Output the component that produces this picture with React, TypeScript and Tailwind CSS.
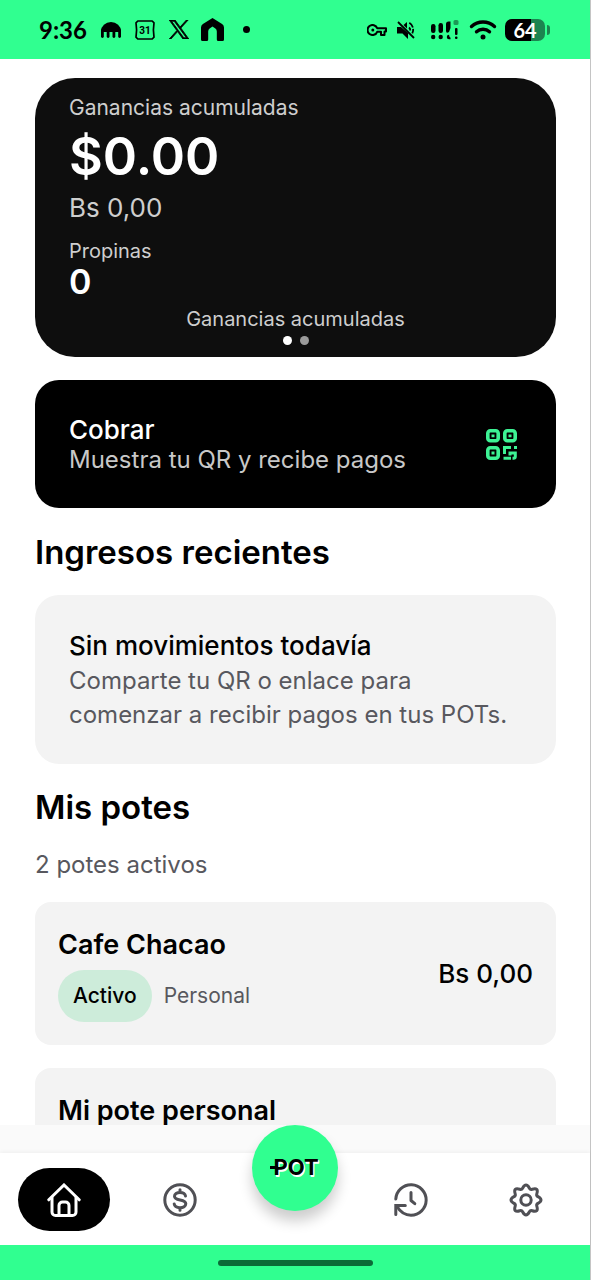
import type { ReactNode } from "react";

type Pot = { id: string; name: string; status?: string; kind?: string; balance?: string };

const pots: Pot[] = [
  { id: "cafe-chacao", name: "Cafe Chacao", status: "Activo", kind: "Personal", balance: "Bs 0,00" },
  { id: "mi-pote", name: "Mi pote personal" },
];

function StatusBar() {
  return (
    <header className="flex h-[59px] shrink-0 items-center justify-between bg-[#30ff90] pl-[39px] pr-10 text-black">
      <div className="flex items-center">
        <time className="w-[62px] font-['Lato',sans-serif] text-2xl font-bold leading-7">9:36</time>
        {/* Kraken */}
        <svg className="h-4 w-5" viewBox="0 0 20 16" fill="currentColor" aria-hidden="true">
          <path d="M0 9a10 9 0 0 1 20 0v1H0Z" />
          <rect x="0" y="7" width="2.800" height="9" rx="1.400" />
          <rect x="5.700" y="7" width="2.800" height="9" rx="1.400" />
          <rect x="11.500" y="7" width="2.800" height="9" rx="1.400" />
          <rect x="17.200" y="7" width="2.800" height="9" rx="1.400" />
        </svg>
        {/* Calendar */}
        <svg className="ml-3.5 size-5" viewBox="0 0 20 20" fill="none" stroke="currentColor" strokeWidth="1.700" aria-hidden="true">
          <path d="M2.800 1h14.400L19 2.800 18.400 10l.6 7.200-1.800 1.800H2.800L1 17.200 1.600 10 1 2.800Z" strokeLinejoin="round" />
          <text x="10" y="13.500" textAnchor="middle" fontSize="10" fontWeight="700" fontFamily="Roboto, sans-serif" fill="currentColor" stroke="none">
            31
          </text>
        </svg>
        {/* X */}
        <svg className="ml-3.5 h-[19px] w-5" viewBox="0 0 24 24" preserveAspectRatio="none" fill="currentColor" aria-hidden="true">
          <path d="M14.234 10.162 22.977 0h-2.072l-7.591 8.824L7.251 0H.258l9.168 13.343L.258 24H2.330l8.016-9.318L16.749 24h6.993zm-2.837 3.299-.929-1.329L3.076 1.560h3.182l5.965 8.532.929 1.329 7.754 11.090h-3.182z" stroke="currentColor" strokeWidth="1" />
        </svg>
        {/* Arch */}
        <svg className="ml-3 h-[23px] w-[23px]" viewBox="0 0 24 23" preserveAspectRatio="none" fill="currentColor" aria-hidden="true">
          <path d="M12 0 22 6Q24 7.200 24 9.500V21.500Q24 23 22.500 23H18Q16.500 23 16.500 21.500V13.500Q16.500 11.500 15 10.500L12 8.500 9 10.500Q7.500 11.500 7.500 13.500V21.500Q7.500 23 6 23H1.500Q0 23 0 21.500V9.500Q0 7.200 2 6Z" />
        </svg>
        <span className="ml-[19px] size-[7px] rounded-full bg-black" />
      </div>

      <div className="flex items-center">
        {/* VPN key */}
        <svg className="h-3 w-5" viewBox="0 0 20 12" fill="none" stroke="currentColor" strokeWidth="2" aria-hidden="true">
          <path d="M10.200 4.200H19v3.300h-1.500V11H14V7.800h-3.800a5 5 0 1 1 0-3.600Z" strokeLinejoin="round" />
          <circle cx="5.800" cy="6" r="1.500" fill="currentColor" stroke="none" />
        </svg>
        {/* Muted */}
        <svg className="ml-2.5 size-[18px]" viewBox="0 0 18 18" fill="none" stroke="currentColor" strokeWidth="1.800" aria-hidden="true">
          <path d="M0 6h4L11 12v6l-5.500-5.500H0Z" fill="currentColor" stroke="none" />
          <path d="M10 1v6.500L6.500 4Z" fill="currentColor" stroke="none" />
          <path d="m1 1 16 16" />
          <path d="M12 6.500q1.400 1 1.200 3M12.300 1.800a8 8 0 0 1 3 10.500" strokeDasharray="6 1.200" />
        </svg>
        {/* Dual signal */}
        <svg className="ml-4 h-5 w-7" viewBox="0 0 28 20" fill="currentColor" aria-hidden="true">
          <rect x="0" y="4" width="4.500" height="9" rx="2.200" />
          <rect x="7.500" y="3" width="4.500" height="10" rx="2.200" />
          <path d="M15 4q0-2.500 2.500-2.500h2V8L18 12q-3 2-3-1.500Z" />
          <circle cx="2.200" cy="17" r="2.200" />
          <circle cx="9.700" cy="17" r="2.200" />
          <path d="M18 14.800a2.200 2.200 0 0 0 0 4.400h1.500v-1.500l-1-1Z" />
          <rect x="22.500" y="0" width="5" height="5" rx="1.500" opacity=".4" />
          <rect x="24" y="8" width="2.500" height="7" rx="1" />
          <rect x="24" y="16.500" width="2.500" height="2.500" rx="1" />
        </svg>
        {/* Wifi */}
        <svg className="ml-2.5 h-5 w-7" viewBox="0 0 28 20" fill="none" stroke="currentColor" strokeWidth="3.400" strokeLinecap="round" aria-hidden="true">
          <path d="M2.500 6.500a17 17 0 0 1 23 0M7.500 11.800a9.500 9.500 0 0 1 13 0" />
          <circle cx="14" cy="17" r="2.500" fill="currentColor" stroke="none" />
        </svg>
        <span className="ml-2 flex h-[22px] w-10 items-center justify-center rounded-[7px] bg-linear-to-r from-black from-65% to-[#1c8450] to-65% font-['Lato',sans-serif] text-xl font-bold leading-5 text-white">
          64
        </span>
        <span className="ml-0.5 h-2.5 w-[3px] rounded-r-full bg-[#1c8450]" />
      </div>
    </header>
  );
}

function EarningsCard() {
  return (
    <section className="flex flex-col rounded-[40px] bg-[#0e0e0e] px-[34px] pb-3 pt-4 text-white">
      <p className="text-[21px] leading-7 text-[#cecece]">Ganancias acumuladas</p>
      <p className="text-[52px] font-semibold leading-[70px]">$0.00</p>
      <p className="text-[26px] leading-8 text-[#cecece]">Bs 0,00</p>
      <p className="mt-[15px] text-xl leading-6 text-[#cecece]">Propinas</p>
      <p className="text-[34px] font-semibold leading-[38px]">0</p>
      <p className="mt-1.5 text-center text-xl leading-6 text-[#cecece]">Ganancias acumuladas</p>
      <div className="mt-[5px] flex justify-center gap-2">
        <span className="size-[9px] rounded-full bg-white" />
        <span className="size-[9px] rounded-full bg-[#9b9b9b]" />
      </div>
    </section>
  );
}

function QrIcon() {
  return (
    <svg className="mr-[5px] size-[31px]" viewBox="0 0 31 31" fill="none" stroke="#3df294" strokeWidth="3.600" aria-hidden="true">
      <rect x="1.800" y="1.800" width="10.400" height="10" rx="2.500" />
      <rect x="18.800" y="1.800" width="10.400" height="10" rx="2.500" />
      <rect x="1.800" y="18.800" width="10.400" height="10.400" rx="2.500" />
      <path d="M5.500 6.800h3M22.500 6.800h3M5.500 24h3" strokeWidth="2.800" />
      <path d="M18.500 25v-6.500h6.500M17.500 29.300h7.500M23 24h6.300v3.500q0 1.800-1.800 1.800h-1M24 22.500v4M28 18.500h3" strokeWidth="3" />
    </svg>
  );
}

function PotCard({ name, status, kind, balance }: Omit<Pot, "id">) {
  return (
    <li className="flex min-h-[143px] justify-between rounded-2xl bg-[#f3f3f3] px-[23px] py-[23px]">
      <div>
        <h3 className="text-[27px] font-semibold leading-10">{name}</h3>
        {status && (
          <div className="mt-[5px] flex items-center gap-3">
            <span className="rounded-full bg-[#cdecda] px-[15px] py-3 text-[21px] font-medium leading-7">{status}</span>
            <span className="text-[21px] leading-7 text-[#58585e]">{kind}</span>
          </div>
        )}
      </div>
      {balance && <p className="self-center text-[26px] font-medium leading-8">{balance}</p>}
    </li>
  );
}

function NavButton({ label, active, children }: { label: string; active?: boolean; children: ReactNode }) {
  return (
    <button
      type="button"
      aria-label={label}
      className={`flex h-[63px] w-[92px] items-center justify-center rounded-full ${
        active ? "bg-black text-white" : "text-[#505055]"
      }`}
    >
      <svg
        className="size-[34px]"
        viewBox="0 0 34 34"
        fill="none"
        stroke="currentColor"
        strokeWidth="3"
        strokeLinecap="round"
        strokeLinejoin="round"
        aria-hidden="true"
      >
        {children}
      </svg>
    </button>
  );
}

function BottomNav() {
  return (
    <nav className="relative shrink-0 bg-[#fafafa] pt-7">
      <div className="flex items-center justify-between bg-white px-[18px] pb-[14px] pt-[15px] shadow-[0_-1px_4px_rgba(0,0,0,0.05)]">
        <NavButton label="Inicio" active>
          <path d="M1.800 16.800 17 2l15.200 14.800" strokeLinejoin="miter" />
          <path d="M5 14.500V29a3.500 3.500 0 0 0 3.500 3.500h17A3.500 3.500 0 0 0 29 29V14.500" />
          <path d="M12 32V22.500a3.500 3.500 0 0 1 3.500-3.500h3a3.500 3.500 0 0 1 3.500 3.500V32" />
        </NavButton>
        <NavButton label="Pagos">
          <circle cx="17" cy="17" r="15.200" />
          <path d="M22.500 13c-.4-2.200-2.500-3.500-5.500-3.500-3.200 0-5.500 1.500-5.500 3.700 0 5.300 11.300 2.200 11.300 7.600 0 2.400-2.500 3.900-5.800 3.900-3.200 0-5.500-1.400-5.800-3.800M17 6.800v2.700M17 24.700v2.500" />
        </NavButton>
        <span className="w-[92px]" />
        <NavButton label="Historial">
          <path d="M1.800 16A15.200 15.200 0 1 1 17 32.200C10.500 32.200 6 28.500 3 23.500" />
          <path d="M1.800 31.500V22.500h9.500" strokeLinejoin="miter" />
          <path d="M17 9.500v8l3.800 3.200" />
        </NavButton>
        <NavButton label="Ajustes">
          <path d="M13.600 5.200C14.500 3.500 15.200 2 17 2s2.500 1.500 3.400 3.200c.6 1.100 1.500 1.500 2.700 1.100 1.900-.6 3.400-1.100 4.600.1 1.200 1.200.7 2.700.1 4.500-.4 1.200 0 2.100 1.100 2.700C30.600 14.500 32 15.200 32 17s-1.400 2.500-3.100 3.400c-1.100.6-1.500 1.500-1.100 2.700.6 1.800 1.100 3.300-.1 4.500-1.200 1.200-2.700.7-4.600.1-1.200-.4-2.100 0-2.700 1.100C19.500 30.500 18.800 32 17 32s-2.500-1.500-3.400-3.200c-.6-1.100-1.500-1.500-2.700-1.100-1.900.6-3.400 1.100-4.600-.1-1.200-1.200-.7-2.700-.1-4.500.4-1.200 0-2.100-1.100-2.700C3.400 19.500 2 18.800 2 17s1.400-2.500 3.100-3.400c1.100-.6 1.500-1.500 1.100-2.700-.6-1.800-1.100-3.300.1-4.500 1.200-1.200 2.700-.7 4.600-.1 1.200.4 2.100 0 2.700-1.100Z" />
          <circle cx="17" cy="17" r="5.200" />
        </NavButton>
      </div>

      {/* Floating POT button */}
      <button
        type="button"
        className="absolute left-1/2 top-0 flex size-[86px] -translate-x-1/2 items-center justify-center rounded-full bg-[#30ff90] pb-0.5 pl-0.5 shadow-[0_10px_14px_rgba(0,0,0,0.2)]"
      >
        <span className="relative text-[22px] font-bold leading-7 text-black [text-shadow:1px_1px_0_#fff,1px_2px_0_#fff]">
          POT
          <span className="absolute -left-[3px] top-[13px] h-[3px] w-2 bg-black" />
        </span>
      </button>

      <div className="flex h-[35px] items-center justify-center bg-[#30ff90]">
        <span className="h-1.5 w-[155px] rounded-full bg-[#0b6b37]" />
      </div>
    </nav>
  );
}

export default function App() {
  return (
    <div className="flex h-screen flex-col border-r border-[#c4c4c4] bg-white font-['Inter',sans-serif] text-black">
      <StatusBar />

      <main className="min-h-0 flex-1 overflow-y-auto pl-[35px] pr-[34px] pt-[19px] [scrollbar-width:none]">
        <EarningsCard />

        <button
          type="button"
          className="mt-[23px] flex w-full items-center justify-between rounded-3xl bg-black px-[34px] py-[34px] text-left"
        >
          <span className="flex flex-col">
            <span className="text-[26px] font-medium leading-8 text-white">Cobrar</span>
            <span className="text-2xl leading-7 text-[#c8c8c8]">Muestra tu QR y recibe pagos</span>
          </span>
          <QrIcon />
        </button>

        <h2 className="mt-6 text-[33px] font-semibold leading-10">Ingresos recientes</h2>
        <section className="mt-[23px] rounded-3xl bg-[#f3f3f3] px-[34px] pb-8 pt-[33px]">
          <h3 className="text-[26px] font-medium leading-9">Sin movimientos todavía</h3>
          <p className="text-2xl leading-[34px] text-[#58585e]">
            Comparte tu QR o enlace para
            <br />
            comenzar a recibir pagos en tus POTs.
          </p>
        </section>

        <h2 className="mt-[23px] text-[33px] font-semibold leading-10">Mis potes</h2>
        <p className="mt-[22px] text-2xl leading-8 text-[#58585e]">{pots.length} potes activos</p>
        <ul className="mt-[21px] flex flex-col gap-[23px]">
          {pots.map((pot) => (
            <PotCard key={pot.id} {...pot} />
          ))}
        </ul>
      </main>

      <BottomNav />
    </div>
  );
}
